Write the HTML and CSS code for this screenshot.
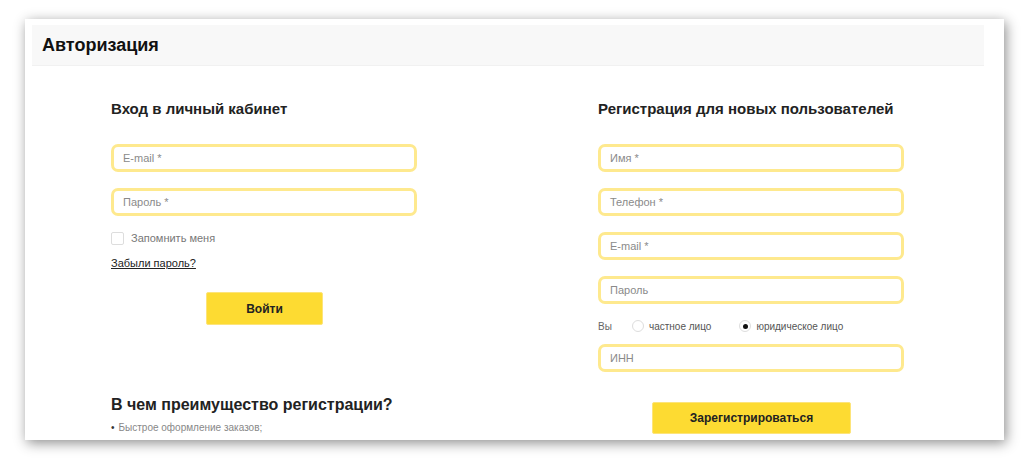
FILE: index.html
```html
<!DOCTYPE html>
<html lang="ru">
<head>
<meta charset="utf-8">
<link rel="stylesheet" href="styles.css">
</head>
<body>
<div class="card">
  <div class="header"><h1 class="title">Авторизация</h1></div>
  <div class="columns">
    <div class="col">
      <h2 class="col-title">Вход в личный кабинет</h2>
      <div class="field">E-mail *</div>
      <div class="field">Пароль *</div>
      <label class="check-row"><span class="checkbox"></span><span>Запомнить меня</span></label>
      <a class="forgot" href="#">Забыли пароль?</a>
      <div class="btn-wrap login-wrap"><span class="btn login-btn">Войти</span></div>
      <h3 class="adv-title">В чем преимущество регистрации?</h3>
      <ul class="adv-list"><li>Быстрое оформление заказов;</li></ul>
    </div>
    <div class="col">
      <h2 class="col-title">Регистрация для новых пользователей</h2>
      <div class="field">Имя *</div>
      <div class="field">Телефон *</div>
      <div class="field">E-mail *</div>
      <div class="field">Пароль</div>
      <div class="radio-row">
        <span class="you">Вы</span>
        <span class="radio"></span><span class="radio-label">частное лицо</span>
        <span class="radio checked"></span><span class="radio-label">юридическое лицо</span>
      </div>
      <div class="field inn">ИНН</div>
      <div class="btn-wrap reg-wrap"><span class="btn reg-btn">Зарегистрироваться</span></div>
    </div>
  </div>
</div>
</body>
</html>
```
FILE: styles.css
```css
html, body {
  margin: 0;
  padding: 0;
  background: #ffffff;
}
body {
  font-family: "Liberation Sans", Arial, sans-serif;
  padding: 19px 20px 0 25px;
  height: 459px;
  box-sizing: border-box;
  overflow: hidden;
}
.card {
  width: 979px;
  height: 421px;
  background: #ffffff;
  box-shadow: 2px 3px 12px rgba(0, 0, 0, 0.45);
  padding: 6px 20px 0 7px;
  box-sizing: border-box;
  overflow: hidden;
}
.header {
  height: 40px;
  background: #f8f8f8;
  border-bottom: 1px solid #f1f1f1;
  display: flex;
  align-items: center;
  padding-left: 10px;
}
.title {
  margin: 0;
  font-size: 18px;
  font-weight: bold;
  color: #111;
}
.columns {
  display: flex;
  gap: 181px;
  padding-left: 79px;
  padding-top: 34px;
}
.col {
  width: 306px;
  display: flex;
  flex-direction: column;
}
.col-title {
  margin: 0 0 26px 0;
  font-size: 15px;
  line-height: 18px;
  font-weight: bold;
  color: #222;
}
.field {
  height: 28px;
  border: 3px solid #fee98e;
  border-radius: 7px;
  box-sizing: border-box;
  padding-left: 9px;
  display: flex;
  align-items: center;
  font-size: 11px;
  color: #8a8a8a;
  margin-bottom: 16px;
}
.check-row {
  display: flex;
  align-items: center;
  gap: 7px;
  font-size: 11px;
  color: #777;
  margin-top: -1px;
  height: 14px;
}
.checkbox {
  width: 11px;
  height: 11px;
  border: 1px solid #ddd;
  border-radius: 2px;
  background: #fff;
}
.forgot {
  margin-top: 12px;
  font-size: 11px;
  color: #222;
  text-decoration: underline;
  width: max-content;
}
.btn-wrap {
  display: flex;
}
.login-wrap {
  margin-top: 23px;
  padding-left: 95px;
}
.btn {
  background: #fddb32;
  border: 1px solid #fde47a;
  border-radius: 2px;
  display: flex;
  align-items: center;
  justify-content: center;
  font-size: 12px;
  font-weight: bold;
  color: #222;
  box-sizing: border-box;
}
.login-btn {
  width: 117px;
  height: 33px;
}
.adv-title {
  margin: 70px 0 0 0;
  font-size: 16px;
  line-height: 20px;
  font-weight: bold;
  color: #222;
}
.adv-list {
  list-style: none;
  margin: 7px 0 0 0;
  padding: 0;
  font-size: 10px;
  color: #888;
}
.adv-list li::before {
  content: "•";
  color: #333;
  margin-right: 4px;
}
.radio-row {
  display: flex;
  align-items: center;
  font-size: 10px;
  color: #555;
  margin-top: -4px;
  height: 20px;
  margin-bottom: 8px;
}
.you {
  width: 34px;
  color: #666;
}
.radio {
  width: 10px;
  height: 10px;
  border: 1px solid #ddd;
  border-radius: 50%;
  margin-right: 5px;
  box-sizing: content-box;
  display: flex;
  align-items: center;
  justify-content: center;
}
.radio.checked::after {
  content: "";
  width: 5px;
  height: 5px;
  border-radius: 50%;
  background: #111;
}
.radio-label {
  margin-right: 28px;
}
.inn {
  margin-bottom: 0;
}
.reg-wrap {
  margin-top: 30px;
  padding-left: 54px;
}
.reg-btn {
  width: 199px;
  height: 32px;
}
```
